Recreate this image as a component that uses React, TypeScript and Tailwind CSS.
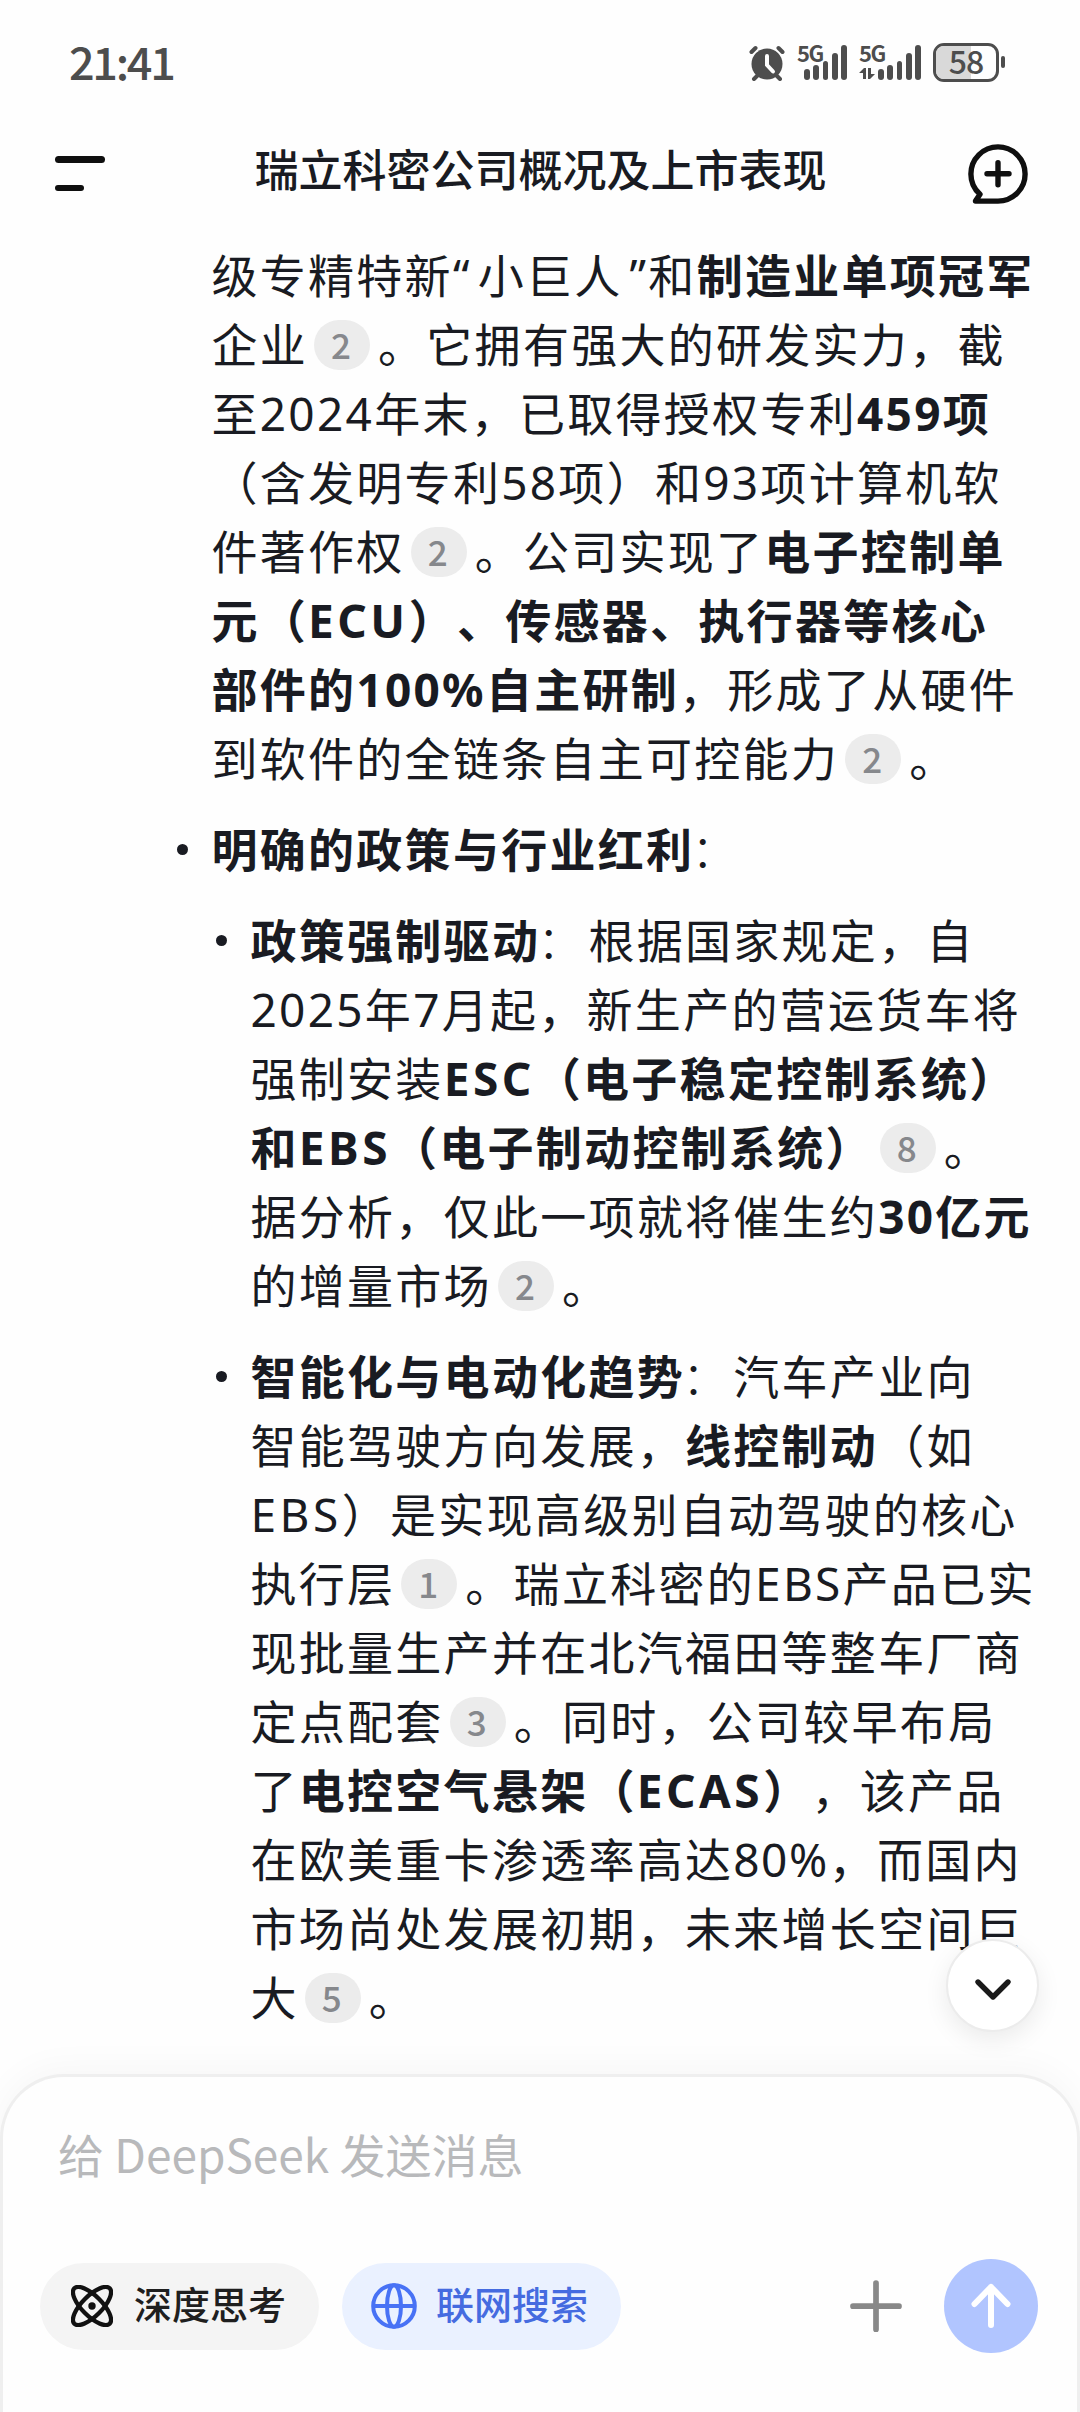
import React from 'react';

const Cite: React.FC<{ n: number }> = ({ n }) => (
  <span className="inline-flex items-center justify-center w-[56px] h-[50px] pb-[3px] pr-[2px] ml-[6px] mr-[8px] rounded-full bg-[#ececec] text-[#86888c] text-[35px] leading-none font-medium tracking-normal align-middle relative -top-[4px] font-['Noto_Sans_CJK_SC',sans-serif]">
    {n}
  </span>
);

const Line: React.FC<{ children: React.ReactNode }> = ({ children }) => (
  <div className="h-[69px] leading-[69px] whitespace-nowrap">{children}</div>
);

const Abbr: React.FC<{ children: React.ReactNode }> = ({ children }) => (
  <span className="tracking-[3.500px]">{children}</span>
);

const Colon = () => <span className="relative -left-[3px] font-light">：</span>;

const Item: React.FC<{ children: React.ReactNode }> = ({ children }) => (
  <li className="flex">
    <span className="w-[11px] h-[11px] mt-[29px] mr-[24px] rounded-full bg-[#191b22] shrink-0" />
    <div>{children}</div>
  </li>
);

const BAR_HEIGHTS = ['h-[11px]', 'h-[15px]', 'h-[19px]', 'h-[27px]', 'h-[35px]'];

const Bars = () => (
  <div className="flex items-end gap-[3.6px]">
    {BAR_HEIGHTS.map((h) => (
      <span key={h} className={`w-[5.7px] rounded-full bg-[#4d4d4d] ${h}`} />
    ))}
  </div>
);

const StatusBar = () => (
  <div className="h-[124px] pl-[69px] pr-[75px] flex items-center justify-between text-[#4d4d4d]">
    <span className="text-[45px] font-medium leading-none tracking-[-2.300px] relative -top-[2px] font-['Noto_Sans_CJK_SC','Noto_Sans',sans-serif]">21:41</span>
    <div className="flex items-center h-[40px]">
      <svg className="mt-[2px]" width="36" height="36" viewBox="0 0 36 36" fill="none" strokeLinecap="round">
        <circle cx="18" cy="19" r="15.5" fill="#4d4d4d" />
        <path d="M2.5 7 6.5 3M33.500 7 29.500 3M5 34l4-4M31 34l-4-4" stroke="#4d4d4d" strokeWidth="4" />
        <path d="M18 11v9l6 6.500" stroke="#fefefe" strokeWidth="4" />
      </svg>
      <div className="relative h-[36px] w-[50px] ml-[12px] flex justify-end">
        <span className="absolute left-0 top-0 text-[22px] leading-[17px] font-bold tracking-[-1.500px] font-['Noto_Sans_CJK_SC',sans-serif]">5G</span>
        <Bars />
      </div>
      <div className="relative h-[36px] w-[62px] ml-[12px] flex justify-end">
        <span className="absolute left-0 top-0 text-[22px] leading-[17px] font-bold tracking-[-1.500px] font-['Noto_Sans_CJK_SC',sans-serif]">5G</span>
        <svg className="absolute left-0 bottom-0" width="16" height="13" viewBox="0 0 16 13" fill="#4d4d4d">
          <path d="M0 6 5 1h2v11H4V6zM9 1h3v6h4l-5 5H9z" />
        </svg>
        <Bars />
      </div>
      <div className="relative ml-[12px] w-[66px] h-[39px] rounded-[11px] border-[3px] border-[#4d4d4d] flex items-center justify-center">
        <span className="absolute left-0 top-0 bottom-0 w-[58%] rounded-l-[8px] bg-[#d9d9d9]" />
        <span className="relative -top-[2px] text-[32px] leading-[33px] font-medium tracking-[-1px] font-['Noto_Sans_CJK_SC',sans-serif]">58</span>
      </div>
      <span className="ml-[2px] w-[4px] h-[12px] rounded-full bg-[#4d4d4d]" />
    </div>
  </div>
);

const Header = () => (
  <header className="h-[106px] pl-[55px] pr-[52px] pb-[4px] flex items-center justify-between">
    <div className="w-[60px] mb-[3px] flex flex-col gap-[22px]">
      <span className="w-[50px] h-[6.500px] rounded-full bg-[#0f0f0f]" />
      <span className="w-[29px] h-[6.500px] rounded-full bg-[#0f0f0f]" />
    </div>
    <h1 className="text-[44px] leading-none font-medium text-[#191b22] relative -top-[5px] -left-[1px]">瑞立科密公司概况及上市表现</h1>
    <svg className="mb-[2px]" width="60" height="60" viewBox="0 0 60 60" fill="none" stroke="#0f0f0f" strokeWidth="5.4" strokeLinecap="round" strokeLinejoin="round">
      <path d="M30 57.100H7.500L12 50.300C6.300 45.300 2.900 38 2.900 30A27.100 27.100 0 1 1 30 57.100z" />
      <path d="M30 18.800v22M19 29.800h22" />
    </svg>
  </header>
);

const Answer = () => (
  <main className="relative h-[1844px] pl-[211.500px] pt-[10.500px] text-[46px] tracking-[2.280px] text-[#191b22] [text-spacing-trim:space-all]">
    <div>
      <Line>级专精特新<span className="mr-[6px]">“</span>小巨人<span className="ml-[7px]">”</span>和<b>制造业单项冠军</b></Line>
      <Line>企业<Cite n={2} />。它拥有强大的研发实力，截</Line>
      <Line>至2024年末，已取得授权专利<b>459项</b></Line>
      <Line>（含发明专利58项）和93项计算机软</Line>
      <Line>件著作权<Cite n={2} />。公司实现了<b>电子控制单</b></Line>
      <Line><b>元（<Abbr>ECU</Abbr>）、传感器、执行器等核心</b></Line>
      <Line><b>部件的100%自主研制</b>，形成了从硬件</Line>
      <Line>到软件的全链条自主可控能力<Cite n={2} />。</Line>
    </div>
    <ul className="-ml-[35px] mt-[22px]">
      <Item>
        <Line><b>明确的政策与行业红利</b><Colon /></Line>
        <ul className="mt-[22px] ml-[4px] flex flex-col gap-[22px]">
          <Item>
            <Line><b>政策强制驱动</b><Colon />根据国家规定，自</Line>
            <Line>2025年7月起，新生产的营运货车将</Line>
            <Line>强制安装<b><Abbr>ESC</Abbr>（电子稳定控制系统）</b></Line>
            <Line><b>和<Abbr>EBS</Abbr>（电子制动控制系统）</b><Cite n={8} />。</Line>
            <Line>据分析，仅此一项就将催生约<b>30亿元</b></Line>
            <Line>的增量市场<Cite n={2} />。</Line>
          </Item>
          <Item>
            <Line><b>智能化与电动化趋势</b><Colon />汽车产业向</Line>
            <Line>智能驾驶方向发展，<b>线控制动</b>（如</Line>
            <Line><Abbr>EBS</Abbr>）是实现高级别自动驾驶的核心</Line>
            <Line>执行层<Cite n={1} />。瑞立科密的EBS产品已实</Line>
            <Line>现批量生产并在北汽福田等整车厂商</Line>
            <Line>定点配套<Cite n={3} />。同时，公司较早布局</Line>
            <Line>了<b>电控空气悬架（<Abbr>ECAS</Abbr>）</b>，该产品</Line>
            <Line>在欧美重卡渗透率高达<span className="tracking-[1.500px]">80%</span>，而国内</Line>
            <Line>市场尚处发展初期，未来增长空间巨</Line>
            <Line>大<Cite n={5} />。</Line>
          </Item>
        </ul>
      </Item>
    </ul>
    <button className="absolute right-[41px] bottom-[42px] w-[93px] h-[93px] rounded-full bg-white border-2 border-[#ececec] shadow-[0_8px_24px_rgba(0,0,0,0.08)] flex items-center justify-center">
      <svg className="mt-[9px]" width="38" height="24" viewBox="0 0 38 24" fill="none" stroke="#1a1a1a" strokeWidth="5.4" strokeLinecap="round" strokeLinejoin="round">
        <path d="M4 4l15 15L34 4" />
      </svg>
    </button>
  </main>
);

const Composer = () => (
  <footer className="h-[338px] rounded-t-[64px] border-[3px] border-b-0 border-[#efefef] bg-[#fefefe] shadow-[0_-6px_36px_rgba(0,0,0,0.035)] pt-[48px]">
    <div className="pl-[55px] h-[56px] leading-[56px] text-[46px] text-[#b8b9bb] font-['Noto_Sans_CJK_SC',sans-serif]">给 DeepSeek 发送消息</div>
    <div className="mt-[78px] pl-[37px] pr-[39px] h-[94px] flex items-center">
      <button className="w-[279px] h-[87px] rounded-full bg-[#f4f4f4] pl-[31px] flex items-center gap-[21px] text-[38px] font-medium text-[#1f1f1f]">
        <svg width="42" height="42" viewBox="0 0 42 42" fill="none" stroke="#111" strokeWidth="4.300">
          <ellipse cx="21" cy="21" rx="25" ry="10" transform="rotate(45 21 21)" />
          <ellipse cx="21" cy="21" rx="25" ry="10" transform="rotate(-45 21 21)" />
          <circle cx="21" cy="21" r="3.700" fill="#111" stroke="none" />
        </svg>
        <span className="pb-[3px]">深度思考</span>
      </button>
      <button className="ml-[23px] w-[279px] h-[87px] rounded-full bg-[#eaf1ff] pl-[29px] flex items-center gap-[19px] text-[38px] font-medium text-[#456be0]">
        <svg width="46" height="46" viewBox="0 0 46 46" fill="none" stroke="#4872f5" strokeWidth="4">
          <circle cx="23" cy="23" r="20.800" />
          <ellipse cx="23" cy="23" rx="7" ry="20.800" />
          <path d="M2 23h42" />
        </svg>
        <span className="pb-[3px]">联网搜索</span>
      </button>
      <svg className="ml-auto" width="52" height="52" viewBox="0 0 52 52" stroke="#888" strokeWidth="5.700" strokeLinecap="round">
        <path d="M26 3v46.500M3 26.200h46" />
      </svg>
      <button className="ml-[42px] w-[94px] h-[94px] rounded-full bg-[#b1c5ff] flex items-center justify-center">
        <svg width="42" height="46" viewBox="0 0 42 46" fill="none" stroke="#fff" strokeWidth="6" strokeLinecap="round" strokeLinejoin="round">
          <path d="M21 42V4M4.500 21 21 4l16.500 17" />
        </svg>
      </button>
    </div>
  </footer>
);

export default function App() {
  return (
    <div className="w-[1080px] h-[2412px] overflow-hidden bg-[#fefefe] flex flex-col font-['Noto_Sans','Noto_Sans_CJK_SC',sans-serif]">
      <StatusBar />
      <Header />
      <Answer />
      <Composer />
    </div>
  );
}
